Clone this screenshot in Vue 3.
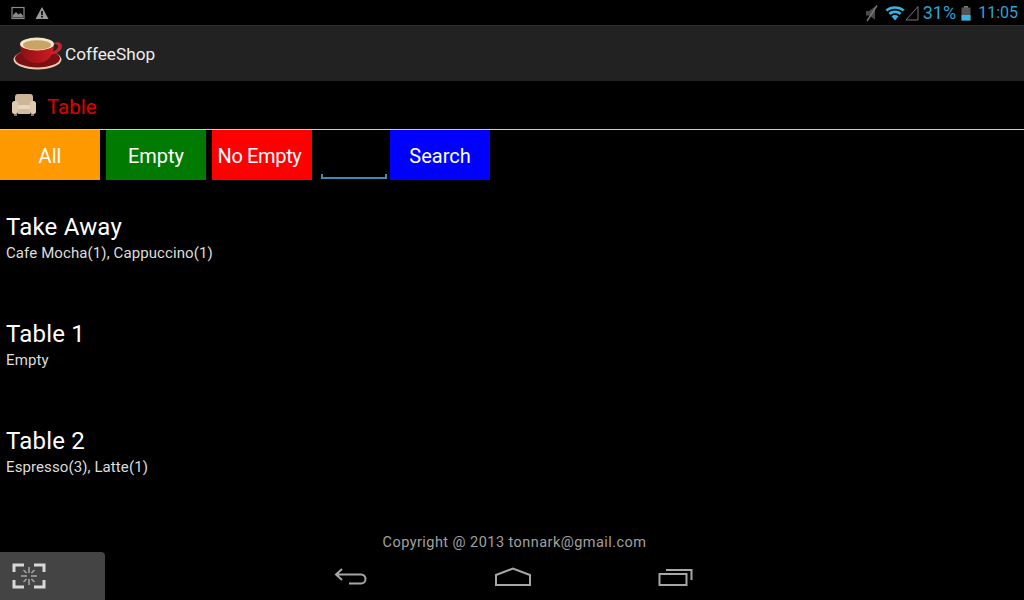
<template>
  <div class="screen">
    <!-- status bar -->
    <div class="status">
      <div class="status-left">
        <svg width="16" height="16" viewBox="0 0 16 16"><rect x="2" y="2.500" width="12" height="11" fill="none" stroke="#8a8a8a" stroke-width="1.200"/><path d="M3 12.500V10l3-3 2.500 2.500L10.500 8 13 10.500v2z" fill="#8a8a8a"/></svg>
        <svg width="16" height="16" viewBox="0 0 16 16"><path d="M8 2l6.500 12h-13z" fill="#9a9a9a"/><rect x="7.200" y="6" width="1.600" height="4.200" fill="#000"/><rect x="7.200" y="11" width="1.600" height="1.600" fill="#000"/></svg>
      </div>
      <div class="status-right">
        <svg class="ic-mute" width="18" height="18" viewBox="0 0 18 18"><path d="M3 7h3l6-4.500v13L6 11.500H3z" fill="#4a4a4a"/><path d="M14 1.500L4 17" stroke="#777" stroke-width="1.400"/></svg>
        <svg class="ic-wifi" width="20" height="16" viewBox="0 0 20 16"><path d="M0.500 4.500C5.500 0 14.500 0 19.500 4.500L17.800 6.400C13.500 2.800 6.500 2.800 2.200 6.400z" fill="#33b5e5"/><path d="M3.600 8C7.200 4.800 12.800 4.800 16.400 8L14.700 9.900C12 7.700 8 7.700 5.300 9.900z" fill="#33b5e5"/><path d="M6.500 11.200C8.500 9.600 11.500 9.600 13.500 11.200L10 15.500z" fill="#33b5e5"/></svg>
        <svg class="ic-signal" width="14" height="16" viewBox="0 0 14 16"><path d="M13 1.500V15H1z" fill="none" stroke="#777" stroke-width="1"/></svg>
        <span class="pct">31%</span>
        <svg class="ic-batt" width="10" height="16" viewBox="0 0 10 16"><rect x="3" y="1" width="4" height="2" fill="#777"/><rect x="0.500" y="2.500" width="9" height="13" fill="#555"/><rect x="0.500" y="10" width="9" height="5.500" fill="#33b5e5"/></svg>
        <span class="clock">11:05</span>
      </div>
    </div>

    <!-- action bar -->
    <div class="actionbar">
      <svg class="cup" width="50" height="34" viewBox="0 0 50 34">
        <defs>
          <linearGradient id="cupRed" x1="0" y1="0" x2="1" y2="0">
            <stop offset="0" stop-color="#8c1014"/>
            <stop offset=".6" stop-color="#b5161c"/>
            <stop offset="1" stop-color="#c92028"/>
          </linearGradient>
        </defs>
        <ellipse cx="24.500" cy="22.500" rx="24" ry="10" fill="#e9c9aa"/>
        <ellipse cx="24.500" cy="21.500" rx="22.500" ry="9" fill="#7c0f13"/>
        <path d="M39 7c4-3 10-2 10 2.500S43.500 17 37 18l1-3c4-1 7-3 7-5.500S42 6.500 38.500 9z" fill="#c2242b"/>
        <path d="M7 7c0 10 5 19 17 19s17-9 17-19z" fill="url(#cupRed)"/>
        <ellipse cx="24" cy="7" rx="17" ry="6.500" fill="#f2e6cc"/>
        <ellipse cx="24" cy="8" rx="14" ry="4.800" fill="#c9a565"/>
      </svg>
      <span class="app-title">CoffeeShop</span>
    </div>

    <!-- section title -->
    <div class="section">
      <svg class="chair" width="26" height="26" viewBox="0 0 26 26">
        <path d="M7 2h12c2 0 3 1 3 3v8H4V5c0-2 1-3 3-3z" fill="#cdb598"/>
        <rect x="1" y="9" width="6" height="13" rx="2.500" fill="#dfcab0"/>
        <rect x="19" y="9" width="6" height="13" rx="2.500" fill="#dfcab0"/>
        <rect x="7" y="13" width="12" height="4" fill="#e6d5bd"/>
        <rect x="7" y="17" width="12" height="5" fill="#d2bb9e"/>
        <rect x="3" y="22" width="3" height="2" fill="#7d7264"/>
        <rect x="20" y="22" width="3" height="2" fill="#7d7264"/>
      </svg>
      <span class="section-title">Table</span>
    </div>

    <!-- filter row -->
    <div class="filters">
      <button
        v-for="f in filters"
        :key="f.label"
        :class="['fbtn', { tight: f.label === 'No Empty' }]"
        :style="{ background: f.color }"
      >{{ f.label }}</button>
      <div class="search-field"></div>
      <button class="fbtn search-btn">Search</button>
    </div>

    <!-- table list -->
    <div class="list">
      <div v-for="t in tables" :key="t.name" class="row">
        <div class="row-name">{{ t.name }}</div>
        <div class="row-sub">{{ t.items }}</div>
      </div>
    </div>

    <div class="copyright">Copyright @ 2013 tonnark@gmail.com</div>

    <!-- nav bar -->
    <div class="navbar">
      <div class="capture">
        <svg width="34" height="28" viewBox="0 0 34 28" fill="none" stroke="#d8d8d8">
          <path d="M12 3H2v7M22 3h10v7M12 25H2v-7M22 25h10v-7" stroke-width="3"/>
          <path d="M17 5v6M17 17v6M9 14h6M19 14h6M11.500 8l3 3M22.500 8l-3 3M11.500 20l3-3M22.500 20l-3-3" stroke-width="1.500" stroke="#a8a8a8"/>
        </svg>
      </div>
      <div class="nav-icons">
        <svg width="34" height="20" viewBox="0 0 34 20" fill="none" stroke="#a6a6a6" stroke-width="2"><path d="M8 2L2 7.500 8 13M2 7.500h25c6 0 6 9 0 9H15"/></svg>
        <svg width="38" height="20" viewBox="0 0 38 20" fill="none" stroke="#a6a6a6" stroke-width="2"><path d="M2 8L19 1.500 36 8v10H2z"/></svg>
        <svg width="36" height="20" viewBox="0 0 36 20" fill="none" stroke="#a6a6a6" stroke-width="2"><rect x="1.500" y="7" width="27" height="11"/><path d="M8 3h25.500v10"/></svg>
      </div>
    </div>
  </div>
</template>

<script setup>
const filters = [
  { label: 'All', color: '#ff9900' },
  { label: 'Empty', color: '#007a00' },
  { label: 'No Empty', color: '#ff0000' },
]

const tables = [
  { name: 'Take Away', items: 'Cafe Mocha(1), Cappuccino(1)' },
  { name: 'Table 1', items: 'Empty' },
  { name: 'Table 2', items: 'Espresso(3), Latte(1)' },
]
</script>

<style>
html, body { background: #000; }
</style>

<style scoped>
.screen {
  width: 1024px;
  height: 600px;
  background: #000;
  color: #fff;
  font-family: Roboto, "Liberation Sans", sans-serif;
  display: flex;
  flex-direction: column;
  overflow: hidden;
}

.status {
  height: 25px;
  display: flex;
  align-items: center;
  justify-content: space-between;
  padding: 0 6px 0 10px;
}
.status-left { display: flex; gap: 8px; }
.status-right { display: flex; align-items: center; color: #33b5e5; }
.ic-mute { margin-right: 4px; }
.ic-signal { margin-right: 4px; }
.pct { font-size: 18px; margin-right: 5px; opacity: .9; }
.ic-batt { margin-right: 7px; }
.clock { font-size: 16px; opacity: .9; }

.actionbar {
  height: 56px;
  box-sizing: border-box;
  background: #222;
  border-top: 1px solid #2e2e2e;
  display: flex;
  align-items: center;
  padding-left: 13px;
}
.cup { margin-right: 2px; }
.app-title { font-size: 17.200px; color: #eee; }

.section {
  height: 49px;
  box-sizing: border-box;
  border-bottom: 1px solid #ccc;
  display: flex;
  align-items: center;
  padding-left: 11px;
}
.section-title {
  font-size: 20.500px;
  color: #e00000;
  margin-left: 10px;
  padding-top: 4px;
}

.filters {
  display: flex;
  gap: 6px;
  height: 50px;
}
.fbtn {
  width: 100px;
  height: 50px;
  border: none;
  padding: 2px 0 0;
  color: #fff;
  font: inherit;
  font-size: 20px;
}
.fbtn.tight {
  letter-spacing: -.35px;
  padding-right: 5px;
}
.search-field {
  width: 66px;
  height: 5px;
  margin: 44px -3px 0 3px;
  box-sizing: border-box;
  border: 2px solid #3a8eb0;
  border-top: none;
}
.search-btn { background: #0000ff; }

.list {
  padding-top: 16px;
  flex: 1;
}
.row {
  height: 107px;
  padding-left: 6px;
  padding-top: 14px;
  box-sizing: border-box;
}
.row-name { font-size: 24px; line-height: 34px; letter-spacing: .2px; }
.row-sub { font-size: 15px; line-height: 18px; letter-spacing: .1px; color: #ddd; }

.copyright {
  text-align: center;
  padding-left: 5px;
  font-size: 14.500px;
  line-height: 18px;
  height: 18px;
  color: #a0a0a0;
  letter-spacing: .45px;
}

.navbar {
  height: 48px;
  display: flex;
}
.capture {
  width: 105px;
  background: #444;
  border-radius: 0 4px 0 0;
  display: flex;
  align-items: center;
  padding-left: 12px;
  box-sizing: border-box;
}
.nav-icons {
  display: flex;
  align-items: center;
  gap: 126px;
  margin-left: 229px;
  padding-top: 2px;
}
</style>
